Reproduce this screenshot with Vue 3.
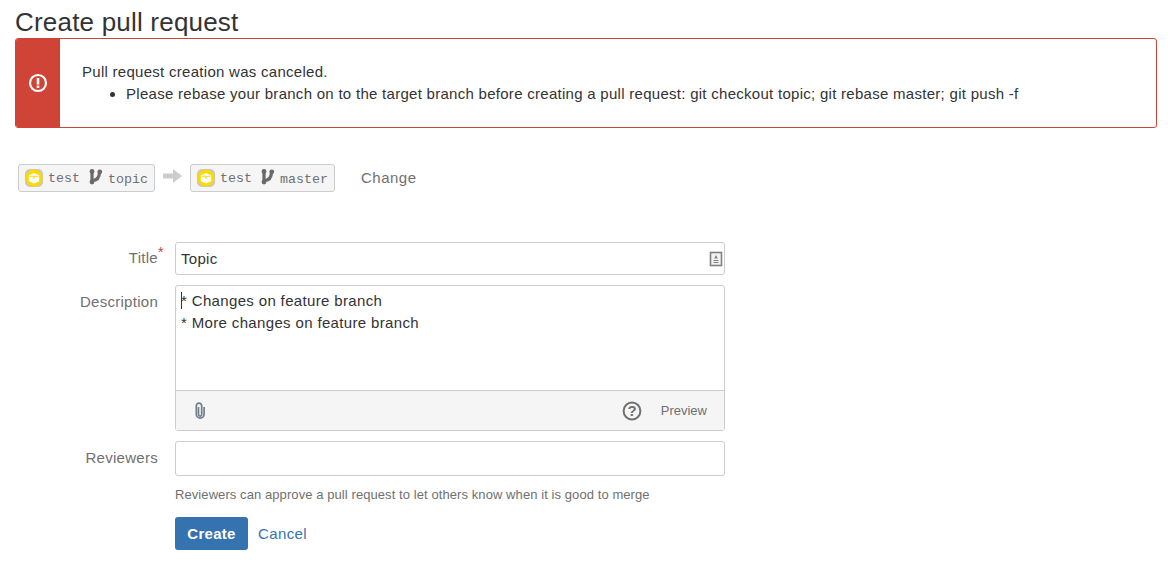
<script setup>
const chips = [
  { repo: 'test', branch: 'topic' },
  { repo: 'test', branch: 'master' }
]
</script>

<template>
  <div class="page">
    <h1 class="title">Create pull request</h1>

    <div class="alert">
      <div class="alert-side">
        <svg width="20" height="20" viewBox="0 0 20 20">
          <circle cx="10" cy="10" r="8" fill="none" stroke="#fff" stroke-width="2.2" />
          <rect x="8.7" y="5" width="2.6" height="6.5" fill="#fff" />
          <rect x="8.7" y="12.6" width="2.6" height="2.4" fill="#fff" />
        </svg>
      </div>
      <div class="alert-body">
        <div>Pull request creation was canceled.</div>
        <ul>
          <li>Please rebase your branch on to the target branch before creating a pull request: git checkout topic; git rebase master; git push -f</li>
        </ul>
      </div>
    </div>

    <div class="branches">
      <template v-for="(c, i) in chips" :key="i">
        <svg v-if="i === 1" class="arrow" width="20" height="16" viewBox="0 0 20 16">
          <path d="M0 5.5h10V1l9 7-9 7v-4.5H0z" fill="#ccc" />
        </svg>
        <div class="chip">
          <svg class="repo" width="18" height="18" viewBox="0 0 18 18">
            <rect width="18" height="18" rx="5" fill="#c8c8c0" />
            <circle cx="9" cy="9" r="8.6" fill="#ffd800" />
            <path d="M3.8 6.2 9 4l5.2 2.2v6L9 14.4l-5.2-2.2z" fill="#fff" />
            <path d="M4.5 7.3h9M9 7.3v2.4" fill="none" stroke="#ffd800" stroke-width="1.1" />
          </svg>
          <span class="mono">{{ c.repo }}</span>
          <svg class="branch" width="14" height="16" viewBox="0 0 14 16">
            <path d="M3 1.5v12M3 11.5c5 0 7.5-3 7.5-8.5" fill="none" stroke="#6a6a6a" stroke-width="3.2" />
            <circle cx="3" cy="2.5" r="2.4" fill="#6a6a6a" />
            <circle cx="3" cy="13" r="2.4" fill="#6a6a6a" />
            <circle cx="10.8" cy="2.8" r="2.4" fill="#6a6a6a" />
          </svg>
          <span class="mono name">{{ c.branch }}</span>
        </div>
      </template>
      <span class="change">Change</span>
    </div>

    <form class="form" @submit.prevent>
      <div class="row">
        <label class="label title-label">Title<sup class="req">*</sup></label>
        <div class="input title-input">
          <span>Topic</span>
          <svg width="14" height="16" viewBox="0 0 14 16">
            <rect x="1.5" y="1.5" width="11" height="13" fill="#f4f4f4" stroke="#808080" stroke-width="1.6" />
            <path d="M7 4 5.2 7.6h3.6zM4.5 9h5v1h-5zM4.5 11h5v1h-5z" fill="#808080" />
          </svg>
        </div>
      </div>

      <div class="row">
        <label class="label desc-label">Description</label>
        <div class="editor">
          <div class="editor-text">
            <div><span class="caret"></span>* Changes on feature branch</div>
            <div>* More changes on feature branch</div>
          </div>
          <div class="toolbar">
            <svg class="clip" width="12" height="17" viewBox="0 0 12 17">
              <path d="M4.5 5v7.5a1.6 1.6 0 0 0 3.2 0V3.8a2.7 2.7 0 0 0-5.4 0v8.4a3.9 3.9 0 0 0 7.8 0V5" fill="none" stroke="#6f7f8c" stroke-width="1.7" />
            </svg>
            <svg class="help" width="20" height="20" viewBox="0 0 20 20">
              <circle cx="10" cy="10" r="8.4" fill="none" stroke="#707070" stroke-width="2" />
              <text x="10" y="15.3" text-anchor="middle" class="help-q">?</text>
            </svg>
            <span class="preview">Preview</span>
          </div>
        </div>
      </div>

      <div class="row">
        <label class="label rev-label">Reviewers</label>
        <div class="input rev-input"></div>
      </div>

      <div class="help-text">Reviewers can approve a pull request to let others know when it is good to merge</div>

      <div class="actions">
        <button class="create" type="button">Create</button>
        <a class="cancel">Cancel</a>
      </div>
    </form>
  </div>
</template>

<style>
html, body { margin: 0; background: #fff; }
</style>

<style scoped>
.page {
  padding: 0 11px 0 15px;
  font-family: "Liberation Sans", Arial, sans-serif;
  font-size: 15px;
  color: #333;
  letter-spacing: 0.28px;
}
.title {
  margin: 0;
  height: 38px;
  line-height: 45px;
  font-size: 26px;
  font-weight: 400;
  color: #333;
  letter-spacing: 0.2px;
}
.alert {
  display: flex;
  height: 90px;
  box-sizing: border-box;
  border: 1px solid #d04437;
  border-radius: 3px;
  overflow: hidden;
}
.alert-side {
  width: 44px;
  flex: none;
  background: #d04437;
  display: flex;
  align-items: center;
  justify-content: center;
}
.alert-body {
  padding: 22px 0 0 22px;
  line-height: 22px;
}
.alert-body ul { margin: 0; padding: 0 0 0 44px; }
.branches {
  display: flex;
  align-items: center;
  height: 28px;
  margin: 36px 0 0 3px;
}
.chip {
  display: flex;
  align-items: center;
  height: 28px;
  box-sizing: border-box;
  border: 1px solid #ccc;
  border-radius: 3px;
  background: #f5f5f5;
  padding: 0 6px;
}
.repo { flex: none; margin-right: 5px; }
.mono {
  font-family: "Liberation Mono", monospace;
  font-size: 13.33px;
  letter-spacing: 0;
  color: #707070;
}
.name { position: relative; top: 1px; }
.branch { margin: -3px 5px 0 9px; flex: none; }
.arrow { margin: 0 7px 4px 8px; flex: none; }
.change { margin: 0 0 2px 26px; color: #707070; letter-spacing: 0.5px; }
.form { margin-top: 50px; }
.row { display: flex; margin-bottom: 10px; }
.label {
  width: 143px;
  flex: none;
  text-align: right;
  color: #707070;
  margin-right: 17px;
  box-sizing: border-box;
}
.title-label { padding-top: 7px; position: relative; }
.desc-label { padding-top: 8px; }
.rev-label { padding-top: 8px; }
.req {
  color: #d04437;
  font-size: 14px;
  line-height: 0;
  position: absolute;
  margin-top: 3px;
}
.input {
  width: 550px;
  box-sizing: border-box;
  border: 1px solid #ccc;
  border-radius: 3px;
  display: flex;
  align-items: center;
  padding: 0 0 0 5px;
}
.title-input { height: 33px; justify-content: space-between; padding-right: 1px; }
.rev-input { height: 35px; }
.editor {
  width: 550px;
  height: 146px;
  box-sizing: border-box;
  border: 1px solid #ccc;
  border-radius: 3px;
  display: flex;
  flex-direction: column;
}
.editor-text {
  flex: 1;
  padding: 4px 5px 0;
  line-height: 22px;
  letter-spacing: 0.35px;
}
.caret {
  display: inline-block;
  width: 1px;
  height: 17px;
  background: #333;
  vertical-align: -3px;
  margin-right: -1px;
}
.toolbar {
  height: 40px;
  flex: none;
  box-sizing: border-box;
  border-top: 1px solid #ccc;
  background: #f5f5f5;
  display: flex;
  align-items: center;
  padding: 0 17px 0 18px;
}
.help { margin-left: auto; margin-right: 19px; }
.help-q {
  font-family: "Liberation Sans", Arial, sans-serif;
  font-size: 15px;
  font-weight: 700;
  fill: #707070;
  letter-spacing: 0;
}
.preview { font-size: 13px; letter-spacing: 0; color: #707070; }
.help-text {
  margin: -1px 0 0 160px;
  font-size: 13px;
  letter-spacing: 0.08px;
  line-height: 20px;
  color: #707070;
}
.actions {
  margin: 12px 0 0 160px;
  display: flex;
  align-items: center;
}
.create {
  width: 73px;
  height: 33px;
  border: 0;
  border-radius: 3px;
  background: #3572b0;
  color: #fff;
  font-family: "Liberation Sans", Arial, sans-serif;
  font-size: 15px;
  font-weight: 700;
  letter-spacing: 0.3px;
  padding: 0;
}
.cancel { margin-left: 10px; color: #3572b0; letter-spacing: 0.4px; }
</style>
